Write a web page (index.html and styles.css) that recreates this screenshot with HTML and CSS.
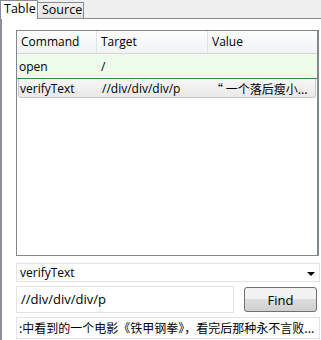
FILE: index.html
```html
<!DOCTYPE html>
<html lang="en">
<head>
  <meta charset="UTF-8">
  <title>Selenium IDE</title>
  <link rel="stylesheet" href="styles.css">
</head>
<body>
  <div class="tabs">
    <div class="tab active">Table</div>
    <div class="tab">Source</div>
  </div>
  <div class="panel">
    <div class="grid">
      <div class="row head">
        <div class="cell c1">Command</div>
        <div class="cell c2">Target</div>
        <div class="cell c3">Value</div>
      </div>
      <div class="row done">
        <div class="cell c1">open</div>
        <div class="cell c2">/</div>
        <div class="cell c3"></div>
      </div>
      <div class="row selected">
        <div class="cell c1">verifyText</div>
        <div class="cell c2">//div/div/div/p</div>
        <div class="cell c3 cjk">“ 一个落后瘦小...</div>
      </div>
    </div>

    <div class="combo">
      <span>verifyText</span>
      <span class="arrow"></span>
    </div>
    <div class="target-row">
      <div class="field target">//div/div/div/p</div>
      <button class="find">Find</button>
    </div>
    <div class="field value cjk">:中看到的一个电影《铁甲钢拳》，看完后那种永不言败...</div>
  </div>
</body>
</html>
```

FILE: styles.css
```css
body {
  margin: 0;
  background: #fff;
  font-family: "Open Sans", "Noto Sans CJK SC", sans-serif;
  font-size: 12px;
  color: #000;
  width: 321px;
  height: 340px;
  overflow: hidden;
}

.cjk {
  font-family: "Noto Sans CJK SC", sans-serif;
}

.tabs {
  display: flex;
  align-items: flex-end;
  height: 18px;
  background: #f0f0f0;
  border-bottom: 1px solid #898c95;
}

.tab {
  box-sizing: border-box;
  height: 16px;
  width: 46px;
  line-height: 14px;
  padding-left: 4px;
  font-size: 12.5px;
  border: 1px solid #898c95;
  border-bottom: none;
  border-left: none;
  background: linear-gradient(#f2f2f2, #e2e2e2);
}

.tab.active {
  height: 19px;
  width: 38px;
  margin-bottom: -1px;
  padding-left: 3px;
  line-height: 16px;
  background: #fff;
  border-left: 1px solid #898c95;
}

.panel {
  height: 321px;
  border-left: 2px solid #8e8f95;
  padding: 11px 2px 0 14px;
  box-sizing: border-box;
}

.grid {
  box-sizing: border-box;
  width: 303px;
  height: 226px;
  border: 1px solid #828790;
  border-right-width: 2px;
}

.row {
  display: flex;
  height: 24px;
  align-items: center;
}

.cell {
  box-sizing: border-box;
  padding-left: 4px;
  white-space: nowrap;
  overflow: hidden;
}

.c1 { width: 80px; }
.c2 { width: 111px; }
.c3 { flex: 1; }

.head {
  height: 22px;
  background: linear-gradient(#fdfdfd, #f1f2f4);
  border-bottom: 1px solid #d5d5d5;
}

.head .cell {
  height: 22px;
  line-height: 22px;
  border-right: 1px solid #e2e3ea;
}

.head .c3 {
  border-right: none;
}

.done {
  background: #eefceb;
  border-bottom: 1px solid #3c8c3c;
}

.done .cell {
  padding-left: 2px;
}

.done .c2 {
  padding-left: 4px;
}

.selected {
  height: 18px;
  margin: 0 1px 0 1px;
  border: 1px solid #c9c9c9;
  border-top: none;
  border-radius: 0 0 3px 3px;
  background: linear-gradient(#f7f7f7, #e9e9e9);
}

.selected .c1 {
  width: 79px;
  padding-left: 1px;
}

.selected .c3 {
  padding-left: 2px;
}

.combo {
  box-sizing: border-box;
  display: flex;
  align-items: center;
  justify-content: space-between;
  width: 304px;
  height: 19px;
  margin-top: 7px;
  padding: 0 4px 0 3px;
  border: 1px solid #e3e3e3;
}

.arrow {
  width: 0;
  height: 0;
  border-left: 4px solid transparent;
  border-right: 4px solid transparent;
  border-top: 4px solid #000;
  margin-top: 2px;
}

.target-row {
  display: flex;
  align-items: center;
  margin-top: 4px;
}

.field {
  box-sizing: border-box;
  border: 1px solid #e3e3e3;
  padding-left: 4px;
  white-space: nowrap;
  overflow: hidden;
}

.target {
  width: 218px;
  height: 27px;
  line-height: 25px;
  font-size: 13px;
}

.find {
  box-sizing: border-box;
  width: 73px;
  height: 25px;
  margin-left: 10px;
  border: 1px solid #707070;
  border-radius: 3px;
  background: linear-gradient(#f2f2f2 50%, #dddddd 50%, #cfcfcf);
  font-family: "Open Sans", sans-serif;
  font-size: 13px;
  color: #000;
}

.value {
  width: 304px;
  height: 22px;
  line-height: 20px;
  margin-top: 4px;
  padding-left: 2px;
}
```
